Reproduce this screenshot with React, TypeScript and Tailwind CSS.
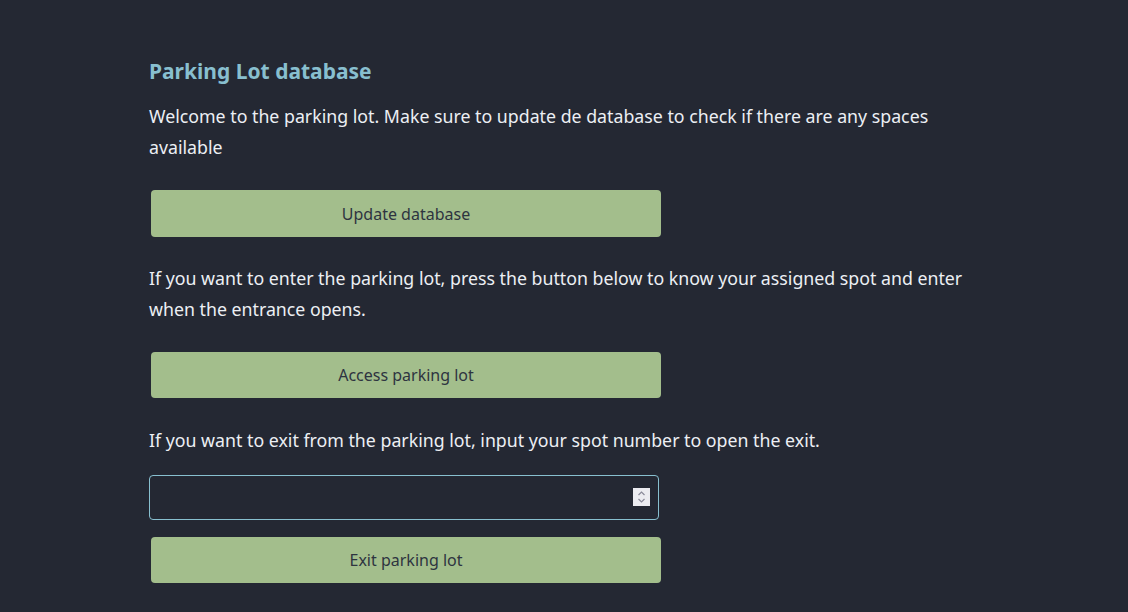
export default function App() {
  return (
    <div
      className="min-h-[612px] w-full bg-[#242833] text-[#eceff4]"
      style={{ fontFamily: "'Noto Sans', 'Open Sans', sans-serif" }}
    >
      <div className="pl-[149px] pt-[55px] w-[979px]">
        <h1 className="text-[21px] leading-[32px] font-bold text-[#88bfcf]">Parking Lot database</h1>
        <p className="mt-[14px] text-[17.75px] leading-[31px]">
          Welcome to the parking lot. Make sure to update de database to check if there are any spaces available
        </p>
        <button className="mt-[27px] ml-[2px] w-[510px] h-[47px] rounded-[4px] bg-[#a3be8c] text-[#2e3440] text-[16px]">
          Update database
        </button>
        <p className="mt-[26px] text-[17.75px] leading-[31px]">
          If you want to enter the parking lot, press the button below to know your assigned spot and enter when the entrance opens.
        </p>
        <button className="mt-[27px] ml-[2px] w-[510px] h-[46px] rounded-[4px] bg-[#a3be8c] text-[#2e3440] text-[16px]">
          Access parking lot
        </button>
        <p className="mt-[27px] text-[17.75px] leading-[31px]">
          If you want to exit from the parking lot, input your spot number to open the exit.
        </p>
        <div className="relative mt-[19px] w-[510px] h-[45px]">
          <input
            type="text"
            className="w-full h-full rounded-[4px] border border-[#88c0d0] bg-[#242833] px-3 outline-none"
          />
          <div className="absolute right-[9px] top-[13px] w-[17px] h-[18px] bg-[#ebebf0] flex flex-col items-center justify-center">
            <svg width="9" height="14" viewBox="0 0 9 14" fill="none" stroke="#8a8a99" strokeWidth="1.2">
              <path d="M1.5 5 L4.5 2 L7.5 5" />
              <path d="M1.5 9 L4.5 12 L7.5 9" />
            </svg>
          </div>
        </div>
        <button className="mt-[17px] ml-[2px] w-[510px] h-[46px] rounded-[4px] bg-[#a3be8c] text-[#2e3440] text-[16px]">
          Exit parking lot
        </button>
      </div>
    </div>
  );
}
